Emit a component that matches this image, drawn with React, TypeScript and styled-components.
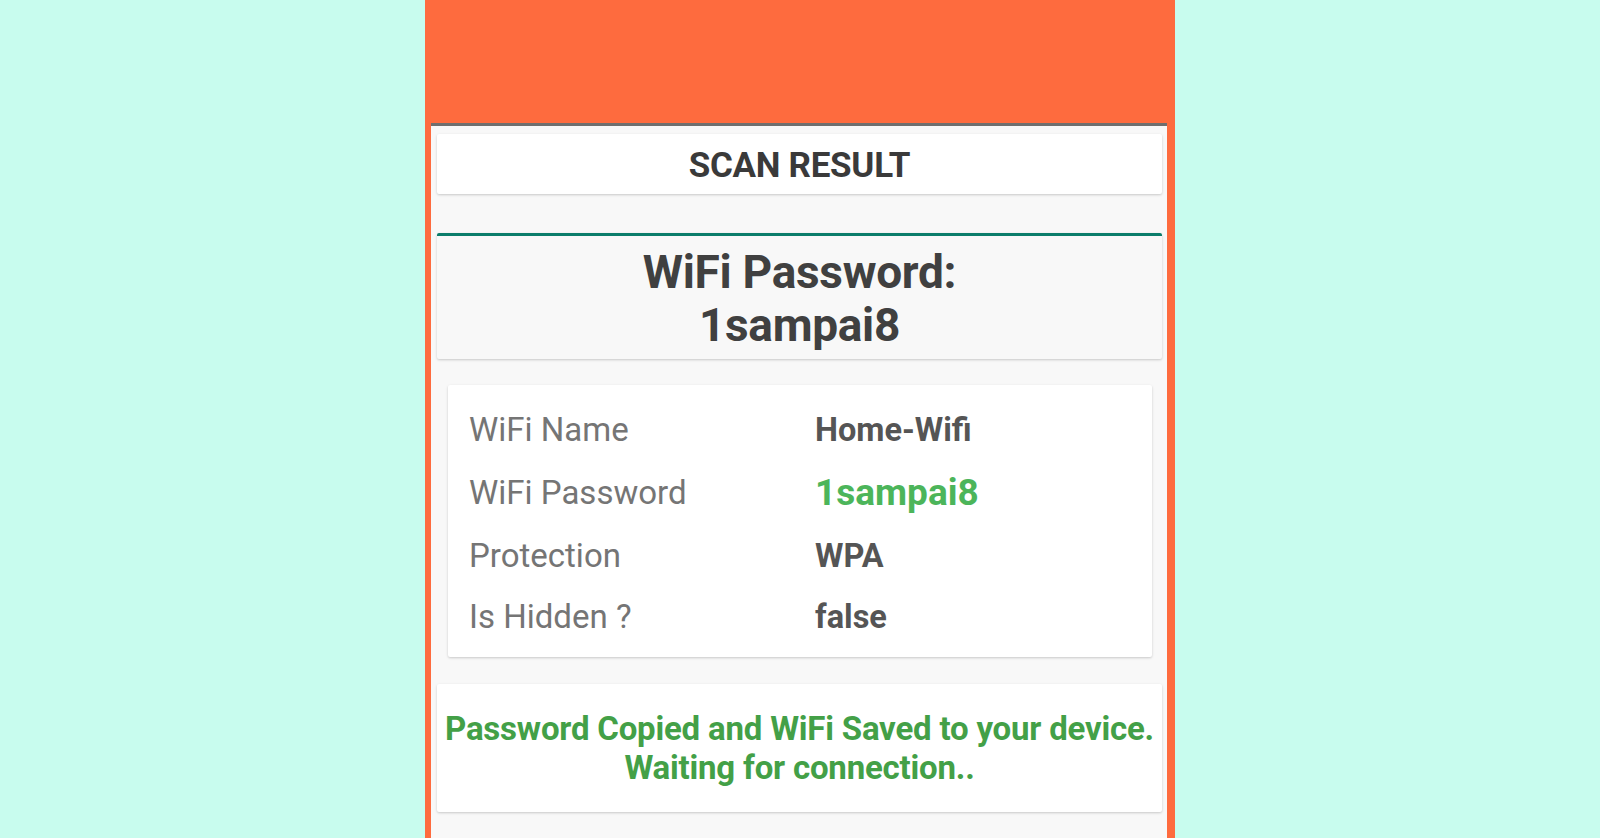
import React from 'react';
import styled, { createGlobalStyle } from 'styled-components';

const GlobalStyle = createGlobalStyle`
  html, body {
    margin: 0;
    padding: 0;
    height: 100%;
    overflow: hidden;
  }
  body {
    background-color: #c8fcee;
    font-family: Roboto, "Liberation Sans", sans-serif;
  }
`;

const Page = styled.div`
  display: flex;
  justify-content: center;
  height: 838px;
  background-color: #c8fcee;
`;

const Phone = styled.div`
  width: 750px;
  height: 838px;
  box-sizing: border-box;
  background-color: #fe6b3e;
  padding: 123px 8px 0 6px;
  display: flex;
`;

const Screen = styled.div`
  flex: 1;
  background-color: #f8f8f8;
  border-top: 3px solid #6e6e6e;
  padding: 8px 5px 0 6px;
  display: flex;
  flex-direction: column;
`;

const Card = styled.div<{ $bg?: string; $accent?: string }>`
  background-color: ${p => p.$bg || '#ffffff'};
  border-top: ${p => (p.$accent ? `3px solid ${p.$accent}` : 'none')};
  border-radius: 2px;
  box-shadow: 0 1px 3px rgba(0, 0, 0, 0.12), 0 1px 2px rgba(0, 0, 0, 0.08);
`;

const TitleBar = styled(Card)`
  height: 60px;
  box-sizing: border-box;
  padding-top: 3px;
  display: flex;
  align-items: center;
  justify-content: center;
  font-size: 35px;
  font-weight: 700;
  color: #3a3a3a;
  letter-spacing: -0.3px;
`;

const PasswordCard = styled(Card)`
  margin-top: 39px;
  height: 126px;
  box-sizing: border-box;
  display: flex;
  flex-direction: column;
  align-items: center;
  justify-content: center;
  padding-top: 2px;
`;

const BigLine = styled.div`
  font-size: 46px;
  font-weight: 700;
  color: #404040;
  line-height: 53px;
  letter-spacing: -0.3px;
`;

const DetailsCard = styled(Card)`
  margin: 26px 10px 0 11px;
  height: 272px;
  box-sizing: border-box;
  padding: 13px 21px 0;
  display: grid;
  grid-template-columns: 346px 1fr;
  grid-template-rows: 63px 63px 63px 59px;
  align-items: center;
`;

const Label = styled.div`
  font-size: 33px;
  color: #757575;
`;

const Value = styled.div<{ $highlight?: boolean }>`
  font-size: ${p => (p.$highlight ? '37px' : '32.5px')};
  font-weight: 700;
  color: ${p => (p.$highlight ? '#4cb55a' : '#555555')};
`;

const MessageCard = styled(Card)`
  margin-top: 27px;
  height: 128px;
  display: flex;
  flex-direction: column;
  align-items: center;
  justify-content: center;
  text-align: center;
  color: #43a047;
  font-size: 33px;
  font-weight: 700;
  line-height: 39px;
  letter-spacing: -0.2px;
`;

const rows = [
  { label: 'WiFi Name', value: 'Home-Wifi' },
  { label: 'WiFi Password', value: '1sampai8', highlight: true },
  { label: 'Protection', value: 'WPA' },
  { label: 'Is Hidden ?', value: 'false' },
];

const App = () => {
  return (
    <Page>
      <GlobalStyle />
      <Phone>
        <Screen>
          <TitleBar>SCAN RESULT</TitleBar>
          <PasswordCard $bg="#f8f8f8" $accent="#0b7d6b">
            <BigLine>WiFi Password:</BigLine>
            <BigLine>1sampai8</BigLine>
          </PasswordCard>
          <DetailsCard>
            {rows.map(row => (
              <React.Fragment key={row.label}>
                <Label>{row.label}</Label>
                <Value $highlight={row.highlight}>{row.value}</Value>
              </React.Fragment>
            ))}
          </DetailsCard>
          <MessageCard>
            <div>Password Copied and WiFi Saved to your device.</div>
            <div>Waiting for connection..</div>
          </MessageCard>
        </Screen>
      </Phone>
    </Page>
  );
};

export default App;
